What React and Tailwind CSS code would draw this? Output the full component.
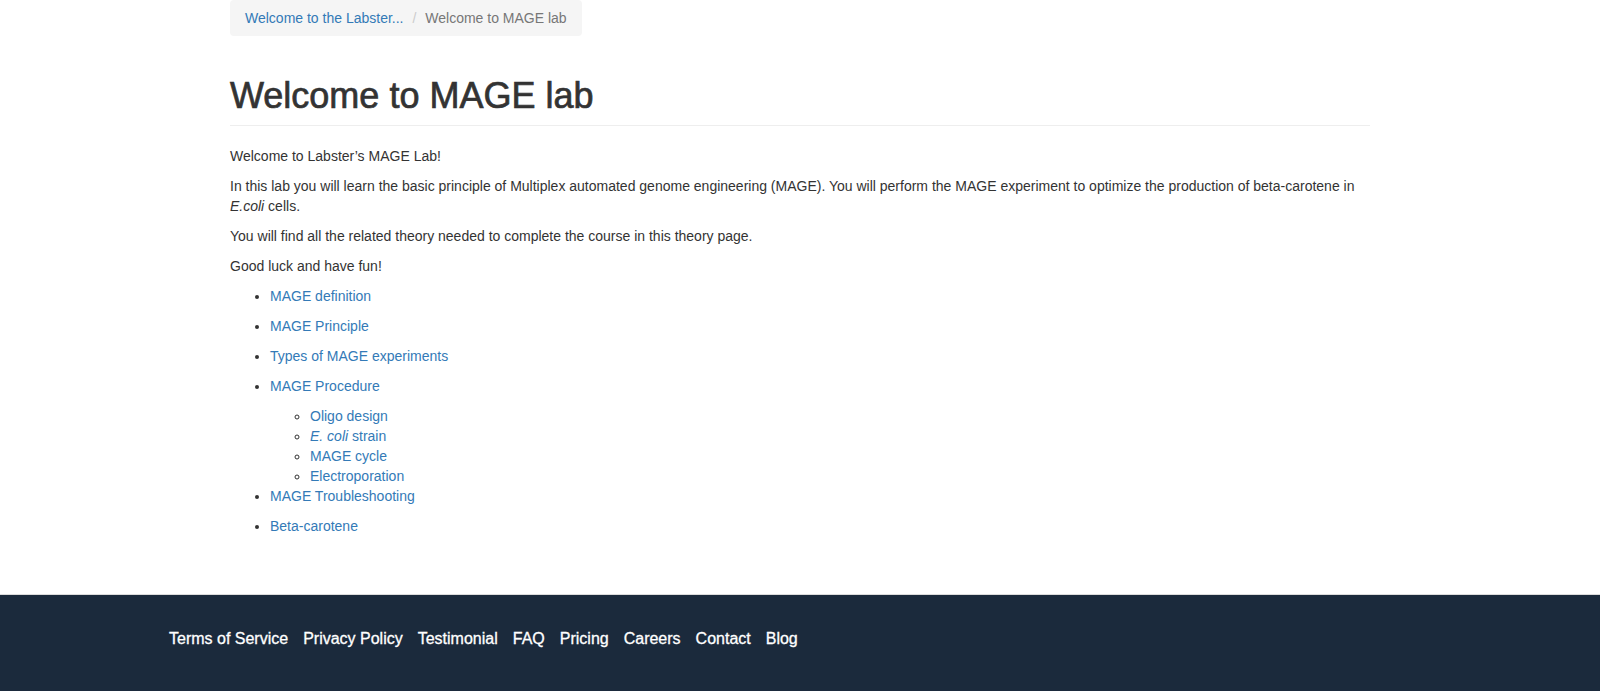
import React from "react";

const link = "text-[#337ab7] no-underline";

export default function App() {
  const items = [
    "MAGE definition",
    "MAGE Principle",
    "Types of MAGE experiments",
  ];
  return (
    <div className="min-h-[691px] flex flex-col bg-white font-['Liberation_Sans',Arial,sans-serif] text-[14px] leading-[20px] text-[#333]">
      <div className="w-[1170px] mx-auto px-[15px] pb-[48px]">
        <ol className="inline-flex items-center bg-[#f5f5f5] rounded-[4px] px-[15px] py-[8px] mb-[20px]">
          <li>
            <a className={link} href="#">Welcome to the Labster...</a>
          </li>
          <li className="text-[#777] ml-[4px]">
            <span className="text-[#ccc] px-[5px]">/&nbsp;</span>
            Welcome to MAGE lab
          </li>
        </ol>
        <div className="mt-[20px] pb-[9px] border-b border-[#eee] mb-[20px]">
          <h1 className="text-[36px] leading-[39.6px] font-normal text-[#333] [-webkit-text-stroke:0.7px_#333]">
            Welcome to MAGE lab
          </h1>
        </div>
        <p className="mb-[10px]">Welcome to Labster’s MAGE Lab!</p>
        <p className="mb-[10px]">
          In this lab you will learn the basic principle of Multiplex automated genome engineering (MAGE). You will perform the MAGE experiment to optimize the production of beta-carotene in{" "}
          <em>E.coli</em> cells.
        </p>
        <p className="mb-[10px]">You will find all the related theory needed to complete the course in this theory page.</p>
        <p className="mb-[10px]">Good luck and have fun!</p>
        <ul className="list-disc pl-[40px]">
          {items.map((t) => (
            <li key={t}>
              <p className="mb-[10px]">
                <a className={link} href="#">{t}</a>
              </p>
            </li>
          ))}
          <li>
            <p className="mb-[10px]">
              <a className={link} href="#">MAGE Procedure</a>
            </p>
            <ul className="list-[circle] pl-[40px]">
              <li><a className={link} href="#">Oligo design</a></li>
              <li><a className={link} href="#"><em>E. coli</em> strain</a></li>
              <li><a className={link} href="#">MAGE cycle</a></li>
              <li><a className={link} href="#">Electroporation</a></li>
            </ul>
          </li>
          <li>
            <p className="mb-[10px]">
              <a className={link} href="#">MAGE Troubleshooting</a>
            </p>
          </li>
          <li>
            <p className="mb-[10px]">
              <a className={link} href="#">Beta-carotene</a>
            </p>
          </li>
        </ul>
      </div>
      <footer className="flex-1 bg-[#1b2a3c] border-t border-[#dcdcdc] pt-[34px] pb-[42px]">
        <nav className="ml-[169px] flex gap-[15px] text-[16px] leading-[20px] text-white [-webkit-text-stroke:0.3px_#fff]">
          {["Terms of Service", "Privacy Policy", "Testimonial", "FAQ", "Pricing", "Careers", "Contact", "Blog"].map((t) => (
            <a key={t} href="#" className="text-white">{t}</a>
          ))}
        </nav>
      </footer>
    </div>
  );
}
